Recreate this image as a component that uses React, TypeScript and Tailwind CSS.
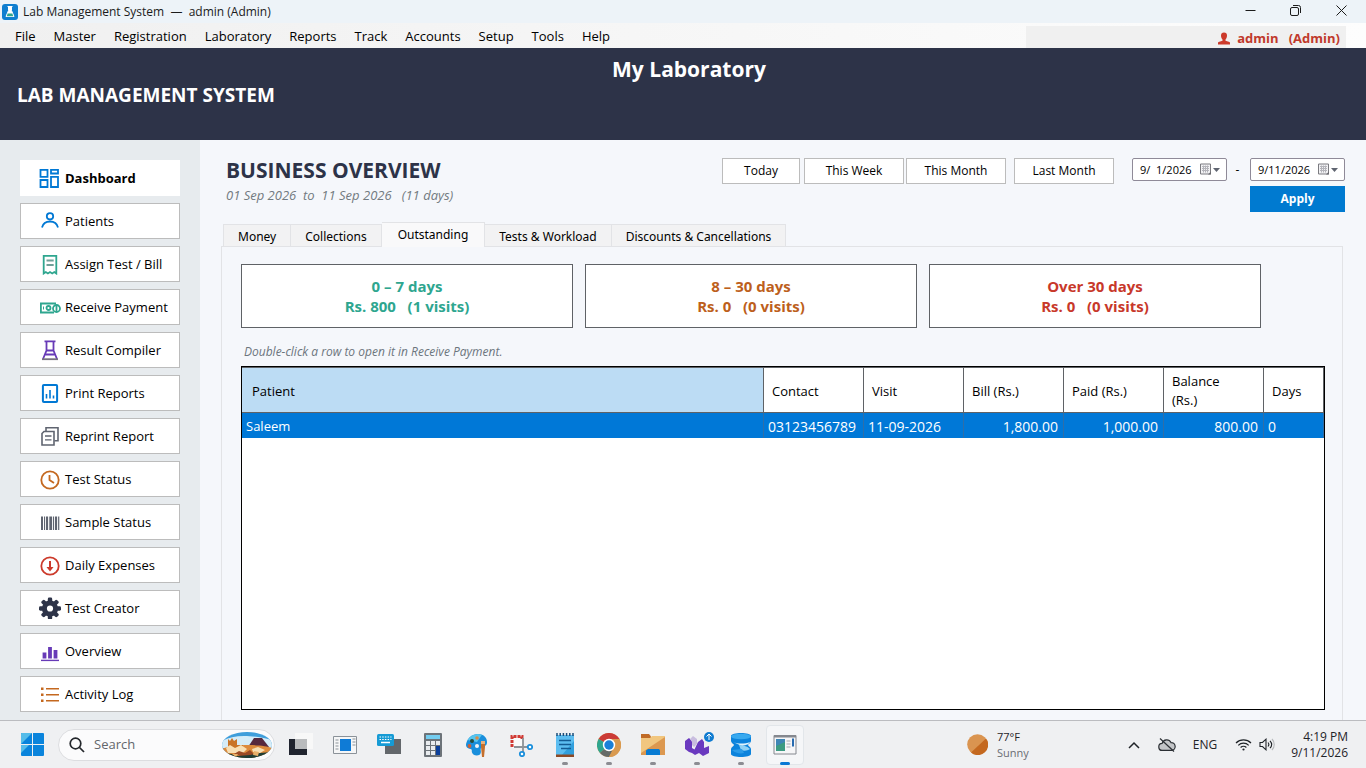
import { useState } from "react";
import type { ReactNode } from "react";
import clsx from "clsx";

/* ---------- sidebar icons, 22 x 22 ---------- */

function Glyph({ color, children }: { color: string; children: ReactNode }) {
  return (
    <svg width="22" height="22" viewBox="0 0 22 22" fill="none" stroke={color} strokeWidth="1.8" className="shrink-0" aria-hidden="true">
      {children}
    </svg>
  );
}

const BLUE = "#0078d4";
const GREEN = "#2ea68f";
const PURPLE = "#673ab7";
const GREY = "#5f6470";
const ORANGE = "#c4681f";
const RED = "#cc3a2b";
const NAVY = "#2d3348";

const gearTeeth = [0, 45, 90, 135, 180, 225, 270, 315];

const navItems = [
  {
    label: "Dashboard",
    icon: (
      <Glyph color={BLUE}>
        <path d="M1.500 2.900h7v7h-7zM12 2.900h7v3.600h-7zM1.500 13h7v7h-7zM12 9.800h7V20h-7z" />
      </Glyph>
    ),
  },
  {
    label: "Patients",
    icon: (
      <Glyph color={BLUE}>
        <circle cx="11" cy="6.300" r="3.200" />
        <path d="M3 17.500c1-4 4-6 8-6s7 2 8 6" />
      </Glyph>
    ),
  },
  {
    label: "Assign Test / Bill",
    icon: (
      <Glyph color={GREEN}>
        <path d="M4.700 20.500V2.900h12.600v17.600l-2-1.400-2.100 1.400-2.200-1.400-2.100 1.400-2.100-1.400z" />
        <path d="M7.500 7.500h7.200M7.500 12h7.200" stroke="#6f9f98" />
      </Glyph>
    ),
  },
  {
    label: "Receive Payment",
    icon: (
      <Glyph color={GREEN}>
        <path d="M17 7.500H1.900v9H15" />
        <circle cx="9.500" cy="12" r="2" />
        <circle cx="17.500" cy="12.500" r="3.500" fill="#fff" />
        <path d="M17.500 10v5" />
        <path d="M4.500 10.500v3" strokeWidth="1" />
      </Glyph>
    ),
  },
  {
    label: "Result Compiler",
    icon: (
      <Glyph color={PURPLE}>
        <path d="M5.500 2.400h11M7.500 2.400v9.600M14.500 2.400v9.600M7.500 11.500h7M7.500 11.500L4 20M14.500 11.500L18 20M6.500 15.500h9" />
        <path d="M3 20.200h16" stroke="#77717f" />
      </Glyph>
    ),
  },
  {
    label: "Print Reports",
    icon: (
      <Glyph color={BLUE}>
        <rect x="3.900" y="2.900" width="14.200" height="17.200" rx="1" strokeWidth="2" />
        <path d="M7.500 12v4.500M11 8v8.500M14.500 13.500v3" strokeWidth="1.600" />
      </Glyph>
    ),
  },
  {
    label: "Reprint Report",
    icon: (
      <Glyph color={GREY}>
        <path d="M7 6V2.800h12v13h-3.500" strokeWidth="1.600" />
        <path d="M5 6.500h10V20H3V8.500z" strokeWidth="1.600" />
        <path d="M6 11h6.500M6 14.800h6.500" strokeWidth="1.300" />
      </Glyph>
    ),
  },
  {
    label: "Test Status",
    icon: (
      <Glyph color={ORANGE}>
        <circle cx="11" cy="12" r="8.700" />
        <path d="M10.500 7v5l4.500 3" />
      </Glyph>
    ),
  },
  {
    label: "Sample Status",
    icon: (
      <Glyph color={GREY}>
        <path d="M3 5.500v13.500" strokeWidth="2" />
        <path d="M5.500 5.500v13.500M14.500 5.500v13.500" strokeWidth="1" />
        <path d="M8 5.500v13.500M17 5.500v13.500" strokeWidth="2.200" />
        <path d="M11.700 5.500v13.500" strokeWidth="2.800" />
        <path d="M19.700 5.500v13.500" strokeWidth="1.200" />
      </Glyph>
    ),
  },
  {
    label: "Daily Expenses",
    icon: (
      <Glyph color={RED}>
        <circle cx="11" cy="12" r="8.700" />
        <path d="M11 7v8" strokeWidth="2" />
        <path d="M7.500 13h7L11 17.500z" fill={RED} stroke="none" />
      </Glyph>
    ),
  },
  {
    label: "Test Creator",
    icon: (
      <Glyph color={NAVY}>
        {gearTeeth.map((a) => (
          <rect key={a} x="8.800" y="0.500" width="4.400" height="5" rx="1.400" fill={NAVY} stroke="none" transform={`rotate(${a} 11 11.500)`} />
        ))}
        <circle cx="11" cy="11.500" r="5.600" strokeWidth="5" />
      </Glyph>
    ),
  },
  {
    label: "Overview",
    icon: (
      <Glyph color={PURPLE}>
        <path d="M2 20.400h18" strokeWidth="1.400" />
        <path d="M5.500 12.500v6M11 7v11.500M16.500 10v8.500" strokeWidth="3.800" />
      </Glyph>
    ),
  },
  {
    label: "Activity Log",
    icon: (
      <Glyph color={ORANGE}>
        <path d="M7 5.800h13M7 11.800h13M7 17.800h13" strokeWidth="1.600" />
        <path d="M2 5.800h2.500M2 11.800h2.500M2 17.800h2.500" strokeWidth="2.400" />
      </Glyph>
    ),
  },
];

const menus = ["File", "Master", "Registration", "Laboratory", "Reports", "Track", "Accounts", "Setup", "Tools", "Help"];

const tabs = ["Money", "Collections", "Outstanding", "Tests & Workload", "Discounts & Cancellations"];

const buckets = [
  { title: "0 – 7 days", amount: "Rs. 800   (1 visits)", tone: "text-[#2ea68f]" },
  { title: "8 – 30 days", amount: "Rs. 0   (0 visits)", tone: "text-[#bd5f1c]" },
  { title: "Over 30 days", amount: "Rs. 0   (0 visits)", tone: "text-[#c8382a]" },
];

const rows = [
  { patient: "Saleem", contact: "03123456789", visit: "11-09-2026", bill: "1,800.00", paid: "1,000.00", balance: "800.00", days: "0" },
];

function TitleBar() {
  return (
    <div className="flex h-[23px] shrink-0 items-center bg-[#edf3f8] pl-0.5 text-[12px]">
      <svg width="16" height="16" viewBox="0 0 16 16" aria-hidden="true">
        <rect width="16" height="16" rx="3" fill="#0f7fd0" />
        <path d="M5.500 2.500h5M6.500 2.500v4L4 12.500h8L9.500 6.500v-4" fill="#fff" stroke="#fff" />
        <path d="M5.700 9.500h4.600l1 2.700H4.700z" fill="#2ea68f" />
      </svg>
      <span className="ml-[5px] whitespace-pre text-[#1b1b1b]">Lab Management System  —  admin (Admin)</span>
      <div className="ml-auto flex h-full text-[#1b1b1b]">
        <button aria-label="Minimize" className="grid w-[45px] place-items-center">
          <svg width="11" height="11" viewBox="0 0 11 11" stroke="currentColor"><path d="M.5 4.500h10" /></svg>
        </button>
        <button aria-label="Restore" className="grid w-[45px] place-items-center pb-0.5">
          <svg width="11" height="11" viewBox="0 0 11 11" fill="none" stroke="currentColor">
            <rect x=".5" y="2.500" width="8" height="8" rx="1.500" />
            <path d="M3 .500h5.500a2 2 0 0 1 2 2V8" />
          </svg>
        </button>
        <button aria-label="Close" className="mr-0.5 grid w-[46px] place-items-center pb-0.5">
          <svg width="11" height="11" viewBox="0 0 11 11" stroke="currentColor"><path d="M.5.500l10 10M10.500.500l-10 10" /></svg>
        </button>
      </div>
    </div>
  );
}

function MenuBar() {
  return (
    <div className="flex h-[25px] shrink-0 bg-linear-to-r from-[#f0f0f0] to-[#fdfdfd] pl-1.5">
      <nav className="flex items-center pt-0.5 text-[13px]">
        {menus.map((m) => (
          <button key={m} className="px-[9px]">{m}</button>
        ))}
      </nav>
      <div className="mr-5 ml-auto flex h-[22px] w-80 items-center justify-end self-end bg-[#f0f0f0] pt-0.5 pr-1.5 text-[13px] leading-5 font-bold text-[#c0392b]">
        <svg width="12" height="13" viewBox="0 0 12 13" fill="#cc3a2b" className="mr-[7px]" aria-hidden="true">
          <path d="M3 3.500C3 1.500 4 .500 6 .500s3 1 3 3c0 1.800-.6 3.200-1.500 4v1.200l4 1.300c.4.200.5.500.5 1.500v1H0v-1c0-1 .1-1.300.5-1.500l4-1.300V7.500C3.600 6.700 3 5.300 3 3.500z" />
        </svg>
        <span className="whitespace-pre">admin   (Admin)</span>
      </div>
    </div>
  );
}

function Sidebar() {
  const [active, setActive] = useState("Dashboard");
  return (
    <aside className="flex w-[200px] shrink-0 flex-col gap-[7px] overflow-hidden bg-[#e7ebee] p-5">
      {navItems.map((item) => (
        <button
          key={item.label}
          onClick={() => setActive(item.label)}
          className={clsx(
            "flex h-9 shrink-0 items-center gap-1 border bg-white pl-[18px] text-left text-[13px] whitespace-nowrap text-black",
            active === item.label ? "border-white font-bold" : "border-[#bcbcbc]"
          )}
        >
          {item.icon}
          <span className="pt-0.5">{item.label}</span>
        </button>
      ))}
    </aside>
  );
}

function DateField({ label, value }: { label: string; value: string }) {
  return (
    <label className="flex h-[23px] w-[95px] items-center rounded-xs border border-[#8f8a98] bg-white pr-1.5">
      <input aria-label={label} defaultValue={value} className="w-full min-w-0 pt-px pl-[7px] text-[11px] outline-none" />
      <svg width="20" height="14" viewBox="0 0 20 14" fill="none" className="shrink-0" aria-hidden="true">
        <path d="M.5 1h10v10H.5z" fill="#f2f2f4" stroke="#7b7b80" />
        <path d="M2 3.500h7M2 5.500h7M2 7.500h7M3.500 2.500v7M5.500 2.500v7M7.500 2.500v7" stroke="#b4b4ba" />
        <path d="M11 8.500v3H8z" fill="#6b6b70" />
        <path d="M13 5h7l-3.500 4z" fill="#5f6470" />
      </svg>
    </label>
  );
}

const rangeBtn = "h-[26px] border border-[#bcbcbc] bg-white text-[12px] text-black";

function Overview() {
  const [tab, setTab] = useState("Outstanding");
  return (
    <main className="flex min-w-0 flex-1 flex-col overflow-hidden bg-[#f5f7fb] px-[21px]">
      <div className="flex h-[81px] shrink-0 items-start pt-[18px]">
        <div className="pl-[5px]">
          <h2 className="text-[21px] leading-6 font-bold text-[#2d3348]">BUSINESS OVERVIEW</h2>
          <p className="text-[13px] leading-[26px] whitespace-pre text-[#727a80] italic">01 Sep 2026  to  11 Sep 2026   (11 days)</p>
        </div>
        <div className="ml-auto flex items-start">
          <button className={clsx(rangeBtn, "mr-1 w-[78px]")}>Today</button>
          <button className={clsx(rangeBtn, "mr-0.5 w-[100px]")}>This Week</button>
          <button className={clsx(rangeBtn, "mr-2 w-[100px]")}>This Month</button>
          <button className={clsx(rangeBtn, "mr-[18px] w-[100px]")}>Last Month</button>
          <DateField label="From date" value="9/  1/2026" />
          <span className="w-[23px] pr-0.5 text-center text-[12px] leading-[23px]">-</span>
          <div className="flex flex-col gap-[5px]">
            <DateField label="To date" value="9/11/2026" />
            <button className="h-[26px] bg-[#007ad0] text-[12px] font-bold text-white">Apply</button>
          </div>
        </div>
      </div>

      <div role="tablist" className="flex h-[25px] shrink-0 items-end pl-0.5 font-['Noto_Sans','Open_Sans',sans-serif]">
        {tabs.map((t) => (
          <button
            key={t}
            role="tab"
            aria-selected={tab === t}
            onClick={() => setTab(t)}
            className={clsx(
              "border-t border-r border-[#e2e3e6] text-[12px] whitespace-nowrap text-black first:border-l",
              tab === t ? "z-10 -mb-px h-[25px] bg-[#f9f9fa] px-4" : "h-[22px] bg-[#f2f2f3] px-[14px] pt-0.5"
            )}
          >
            {t}
          </button>
        ))}
      </div>

      <section className="mr-0.5 flex min-h-0 flex-1 flex-col border-x border-t border-[#e2e3e6] pt-[17px] pr-[17px] pb-2.5 pl-[19px]">
        <div className="grid grid-cols-3 gap-3 pr-16">
          {buckets.map((b) => (
            <button key={b.title} className={clsx("h-16 border border-[#5f6266] bg-white text-[15px] leading-5 font-bold whitespace-pre", b.tone)}>
              <span className="block">{b.title}</span>
              <span className="block">{b.amount}</span>
            </button>
          ))}
        </div>

        <p className="pt-[14px] pb-1 pl-[3px] text-[12px] leading-5 text-[#6c757d] italic">Double-click a row to open it in Receive Payment.</p>

        <div className="min-h-0 flex-1 border border-black bg-white">
          <table className="w-full table-fixed border-collapse border-t border-[#5f6266] text-[13px]">
            <colgroup>
              <col />
              <col className="w-[100px]" />
              <col className="w-[100px]" />
              <col className="w-[100px]" />
              <col className="w-[100px]" />
              <col className="w-[100px]" />
              <col className="w-[60px]" />
            </colgroup>
            <thead>
              <tr className="h-[45px] border-b border-[#5f6266] text-left leading-[19px] [&>th]:border-r [&>th]:border-[#5f6266] [&>th]:px-2 [&>th]:pt-0.5 [&>th]:pb-0 [&>th]:font-normal">
                <th className="bg-[#bcdcf4]"><span className="pl-0.5">Patient</span></th>
                <th>Contact</th>
                <th>Visit</th>
                <th>Bill (Rs.)</th>
                <th>Paid (Rs.)</th>
                <th>Balance<br />(Rs.)</th>
                <th>Days</th>
              </tr>
            </thead>
            <tbody>
              {rows.map((r) => (
                <tr key={r.contact} className="h-[25px] bg-[#0078d7] text-[14px] text-white [&>td]:border-r [&>td]:border-[#2f6ea8] [&>td]:pt-0.5 [&>td]:pr-[5px] [&>td]:pb-0 [&>td]:pl-1">
                  <td className="text-[13px]">{r.patient}</td>
                  <td>{r.contact}</td>
                  <td>{r.visit}</td>
                  <td className="text-right">{r.bill}</td>
                  <td className="text-right">{r.paid}</td>
                  <td className="text-right">{r.balance}</td>
                  <td>{r.days}</td>
                </tr>
              ))}
            </tbody>
          </table>
        </div>
      </section>
    </main>
  );
}

/* ---------- taskbar, app icons are 24 x 24 ---------- */

function AppIcon({ children }: { children: ReactNode }) {
  return <svg width="24" height="24" viewBox="0 0 24 24" aria-hidden="true">{children}</svg>;
}

const apps = [
  {
    name: "Task view",
    icon: (
      <AppIcon>
        <path d="M0 6h18v16H0z" fill="#20242f" />
        <path d="M6 0h18v16H6z" fill="#f8f8f8" />
        <path d="M6 6h12v10H6z" fill="#b9bbbd" />
      </AppIcon>
    ),
  },
  {
    name: "Form designer",
    icon: (
      <AppIcon>
        <path d="M.5 3.500h23v17H.5z" fill="#f5f6f7" stroke="#8b9299" />
        <path d="M7 6h11v12H7z" fill="#0f7bd6" />
        <path d="M2.500 7h3M2.500 10h3M2.500 13h3M2.500 16h3M19.500 6h3M19.500 9h3M19.500 12h3" stroke="#8b9299" />
      </AppIcon>
    ),
  },
  {
    name: "Touch keyboard",
    icon: (
      <AppIcon>
        <path d="M8 6h16v15H8z" fill="#63676b" />
        <rect width="17" height="12" y="1" rx="1.500" fill="#169bd5" />
        <path d="M2.500 4h12M2.500 6.500h12" stroke="#fff" strokeWidth="1.200" strokeDasharray="1.500 1.200" />
        <path d="M4 9.500h9" stroke="#fff" strokeWidth="1.500" />
      </AppIcon>
    ),
  },
  {
    name: "Calculator",
    icon: (
      <AppIcon>
        <rect x="3" width="18" height="24" rx="1" fill="#6d7379" />
        <path d="M5 2h14v4H5z" fill="#74cdf0" />
        <path d="M5 8h4v4H5zM10 8h4v4h-4zM15 8h4v4h-4zM5 13h4v4H5zM10 13h4v4h-4zM5 18h4v4H5zM10 18h4v4h-4z" fill="#e9ecef" />
        <path d="M15 13h4v9h-4z" fill="#0b3f9b" />
      </AppIcon>
    ),
  },
  {
    name: "Paint",
    icon: (
      <AppIcon>
        <path d="M13 1c6 0 9.500 4 9 9-.5 4-5 3-6 5s1 4-1 6.500c-3 2-7 1-8-2-.5-2 .5-3-1.500-3.500C2 15.500 0 13 1.500 9.500 3 5 7 1 13 1z" fill="#1a8fdc" />
        <path d="M13 1C9 1 5 3 2.500 7L12 9l5-7.300z" fill="#56c5ee" />
        <circle cx="7" cy="8" r="2" fill="#244a3c" />
        <circle cx="12" cy="5" r="1.800" fill="#d98b47" />
        <circle cx="4.500" cy="13" r="1.900" fill="#cf5e34" />
        <circle cx="12" cy="13" r="2" fill="#f1f4f6" />
        <path d="M16 8h4v6l-1 10h-2l-1-10z" fill="#c46f2d" />
        <path d="M16 8h4v3h-4z" fill="#e9b17c" />
      </AppIcon>
    ),
  },
  {
    name: "Snipping Tool",
    icon: (
      <AppIcon>
        <path d="M3 4h11v11H3z" fill="#fafafa" />
        <path d="M3 14V3.500h10V6" fill="none" stroke="#d13a34" strokeWidth="3" strokeDasharray="3 1" />
        <path d="M14 5v14M5 14h14" stroke="#8d9297" strokeWidth="1.800" />
        <circle cx="21" cy="14" r="2.200" fill="#fff" stroke="#1a8fdc" strokeWidth="1.800" />
        <circle cx="13" cy="21" r="2.200" fill="#fff" stroke="#1a8fdc" strokeWidth="1.800" />
      </AppIcon>
    ),
  },
  {
    name: "Notepad",
    running: true,
    icon: (
      <AppIcon>
        <path d="M3 2h18v20H3z" fill="#5cbdf0" />
        <path d="M21 8v14H9z" fill="#319fdd" />
        <path d="M4 0v3M7.200 0v3M10.400 0v3M13.600 0v3M16.800 0v3M20 0v3" stroke="#1d4d79" strokeWidth="1.500" />
        <path d="M6 7.500h12M6 11.500h12M8 15.500h10" stroke="#135b94" strokeWidth="1.400" />
        <path d="M3 21.500h18V24H3z" fill="#8d4a26" />
      </AppIcon>
    ),
  },
  {
    name: "Google Chrome",
    running: true,
    icon: (
      <AppIcon>
        <circle cx="12" cy="12" r="12" fill="#d99a50" />
        <path d="M12 12L1.600 6A12 12 0 0 1 22.400 6z" fill="#cb3a36" />
        <path d="M12 12L1.600 6A12 12 0 0 0 3 20z" fill="#2ea68f" />
        <path d="M12 12L3 20a12 12 0 0 0 9 4l3-6z" fill="#666b68" />
        <path d="M12 6h10.400A12 12 0 0 1 12 24l5.200-9z" fill="#d99a50" />
        <circle cx="12" cy="12" r="6.200" fill="#fff" />
        <circle cx="12" cy="12" r="4.700" fill="#1a80d8" />
      </AppIcon>
    ),
  },
  {
    name: "File Explorer",
    running: true,
    icon: (
      <AppIcon>
        <path d="M0 1h8l2 2.500V9H0z" fill="#c06a26" />
        <path d="M0 5h9l2-2h13v19H0z" fill="#f1c67f" />
        <path d="M24 4v18H0v-2z" fill="#dc9850" />
        <path d="M5 22v-4.500L7 16h11l1 1.500V22z" fill="#087bd3" />
      </AppIcon>
    ),
  },
  {
    name: "Visual Studio",
    running: true,
    icon: (
      <AppIcon>
        <path d="M0 8l4-3 3 3v7l2.500 1.500L13 9l4-3 2 3v6l5-2v7l-6 3-4-3-4 2-3-2-3-1-4-3z" fill="#6a39bf" />
        <path d="M5 6l3-3 4 3v5l-3 3-2-2V9z" fill="#c9bddf" />
      </AppIcon>
    ),
  },
  {
    name: "SQL Server Management Studio",
    running: true,
    icon: (
      <AppIcon>
        <path d="M2 3c0-4 20-4 20 0v5c0 2-3 3-3 4s3 2 3 4v5c0 4-20 4-20 0v-5c0-2 3-3 3-4S2 10 2 8z" fill="#0c83dc" />
        <ellipse cx="12" cy="3.500" rx="10" ry="2.800" fill="#38a9ef" />
        <path d="M4 9c5 2 12 2 17 0-1 2-3 3-8 4z" fill="#dff3fc" />
        <path d="M10 12c4 0 8 1 11 4-3 2-6 2-9 1z" fill="#8fd2f5" />
        <path d="M3 17c3 3 8 4 12 3l-2-4z" fill="#2b9be8" />
      </AppIcon>
    ),
  },
  {
    name: "Lab Management System",
    running: true,
    active: true,
    icon: (
      <AppIcon>
        <path d="M1 2.500h22v18.500H1z" fill="#f6f6f8" stroke="#85888f" />
        <path d="M1 3.500h22" stroke="#85888f" strokeWidth="2" />
        <path d="M3 6h9v12H3z" fill="#3f86b5" />
        <path d="M3 18V13l9-4v9z" fill="#3c9b82" />
        <path d="M13.500 8h4M13.500 11h4M13.500 14h4" stroke="#a6a9b0" />
        <path d="M20 5.500v8" stroke="#276bb0" strokeWidth="2" />
      </AppIcon>
    ),
  },
];

function Taskbar() {
  return (
    <footer className="flex h-12 shrink-0 items-center border-t border-[#bbbcc0] bg-[#eff0f2] text-[11px] text-[#1f2328]">
      <button aria-label="Start" className="ml-[21px]">
        <svg width="23" height="23" viewBox="0 0 23 23">
          <path d="M0 1a1 1 0 0 1 1-1h10v11H0zM12 0h10a1 1 0 0 1 1 1v10H12zM0 12h11v11H1a1 1 0 0 1-1-1zM12 12h11v10a1 1 0 0 1-1 1H12z" fill="#0a84dc" />
          <path d="M0 1a1 1 0 0 1 1-1h10L0 11zM0 12h8l-8 8z" fill="#55bce9" />
        </svg>
      </button>
      <label className="ml-[14px] flex h-8 w-[217px] items-center overflow-hidden rounded-full border border-[#dcdde0] bg-[#fbfbfc] pr-0.5 pl-2.5">
        <svg width="16" height="16" viewBox="0 0 16 16" fill="none" stroke="#24272c" strokeWidth="1.700" className="shrink-0" aria-hidden="true">
          <circle cx="6.500" cy="6.500" r="5.300" />
          <path d="M10.500 10.500l4.500 4.500" />
        </svg>
        <input aria-label="Search" placeholder="Search" className="ml-[9px] w-full min-w-0 text-[13px] outline-none placeholder:text-[#63666b]" />
        <svg width="50" height="26" viewBox="0 0 50 26" className="shrink-0" aria-hidden="true">
          <clipPath id="scene"><ellipse cx="25" cy="13" rx="25" ry="13" /></clipPath>
          <g clipPath="url(#scene)">
            <path d="M0 0h50v26H0z" fill="#3f9edb" />
            <path d="M0 9c12-6 25-7 50-1v8H0z" fill="#d5ecf8" />
            <path d="M26 15l6-9h8l7 9z" fill="#56283d" />
            <path d="M0 17c10-5 40-5 50-1v10H0z" fill="#dc8a3c" />
            <path d="M6 17V7l2 2 2-3 2 3 3-2v6h6v5z" fill="#c97427" />
            <path d="M4 16l4-3 5 3 6-3 6 4-4 4H6zM30 17l6-2 7 3-5 3-7-1z" fill="#f8dfb4" />
            <path d="M12 22l5-3 6 2 5-3 5 5-8 3z" fill="#9b4a25" />
            <path d="M0 21l10 1 6 2 12-1 10-2 12-1v6H0z" fill="#1f3d35" />
            <path d="M10 22h6l-2 3zM32 19l5 1-1 4-5-1z" fill="#e9b16b" />
          </g>
        </svg>
      </label>

      <div className="ml-1 flex">
        {apps.map((a) => (
          <button key={a.name} aria-label={a.name} className="relative flex h-12 w-11 items-center justify-center">
            {a.active && <span className="absolute inset-x-[3px] inset-y-1 rounded-sm border border-[#e2e6ea] bg-[#f5f6f8]" />}
            <span className="relative">{a.icon}</span>
            {a.running && (
              <span className={clsx("absolute bottom-1 h-[3px] rounded-full", a.active ? "w-2.5 bg-[#0a78d4]" : "w-1.5 bg-[#8c8c92]")} />
            )}
            {a.name === "Visual Studio" && (
              <span className="absolute top-[11px] right-[5px] grid size-2.5 place-items-center rounded-full bg-[#0f7bd0]">
                <svg width="6" height="7" viewBox="0 0 6 7" fill="none" stroke="#fff" aria-hidden="true"><path d="M3 7V1M.5 3.500L3 1l2.500 2.500" /></svg>
              </span>
            )}
          </button>
        ))}
      </div>

      <button className="ml-40 flex items-center gap-[9px] text-left leading-4">
        <svg width="21" height="21" viewBox="0 0 21 21" aria-hidden="true">
          <circle cx="10.500" cy="10.500" r="10.300" fill="#da9450" />
          <path d="M19 4.500A10.300 10.300 0 0 1 4 18.500z" fill="#c4681f" />
        </svg>
        <span>
          <span className="block">77°F</span>
          <span className="block text-[#6a6d72]">Sunny</span>
        </span>
      </button>

      <div className="mr-[18px] ml-auto flex items-center text-[12px]">
        <button aria-label="Show hidden icons" className="mr-[18px]">
          <svg width="12" height="8" viewBox="0 0 12 8" fill="none" stroke="#1f2328" strokeWidth="1.500"><path d="M1 7l5-5 5 5" /></svg>
        </button>
        <button aria-label="OneDrive" className="mr-[17px]">
          <svg width="18" height="14" viewBox="0 0 18 14" fill="#c3c5c8" stroke="#2b2f34" strokeWidth="1.200">
            <path d="M4.500 12.400a3.500 3.500 0 0 1-.4-7A4.800 4.800 0 0 1 13 4.600a3.900 3.900 0 0 1 .5 7.800z" />
            <path d="M2 .500l14 13" />
          </svg>
        </button>
        <button className="mr-[18px]">ENG</button>
        <button aria-label="Network and volume" className="mr-4 flex items-center gap-[7px]">
          <svg width="17" height="13" viewBox="0 0 17 13" fill="none" stroke="#1f2328" strokeWidth="1.200">
            <path d="M1 5a10.500 10.500 0 0 1 15 0M3.300 7.300a7.300 7.300 0 0 1 10.400 0M5.600 9.500a4.200 4.200 0 0 1 5.800 0" />
            <circle cx="8.500" cy="11.500" r="1.100" fill="#1f2328" stroke="none" />
          </svg>
          <svg width="16" height="13" viewBox="0 0 16 13" fill="none" stroke="#1f2328" strokeWidth="1.100">
            <path d="M1 4.500h2.500L7 1.200v10.600L3.500 8.500H1z" />
            <path d="M9 4.500c1 1.200 1 2.800 0 4M11 2.800c2 2.200 2 5.200 0 7.400" />
            <path d="M13 1c3 3.200 3 7.800 0 11" stroke="#b6b8bb" />
          </svg>
        </button>
        <button className="text-right leading-4">
          <span className="block">4:19 PM</span>
          <span className="block">9/11/2026</span>
        </button>
      </div>
    </footer>
  );
}

export default function App() {
  return (
    <div className="flex h-screen flex-col overflow-hidden font-['Open_Sans','Noto_Sans',sans-serif] text-black">
      <TitleBar />
      <MenuBar />
      <header className="grid h-[92px] shrink-0 grid-cols-[1fr_auto_1fr] bg-[#2d3348] pt-[7px] pl-3 text-white">
        <div className="self-center pb-1.5 pl-[5px] text-[19px] leading-6 font-bold">LAB MANAGEMENT SYSTEM</div>
        <h1 className="text-[21px] leading-7 font-bold">My Laboratory</h1>
      </header>
      <div className="flex min-h-0 flex-1">
        <Sidebar />
        <Overview />
      </div>
      <Taskbar />
    </div>
  );
}
